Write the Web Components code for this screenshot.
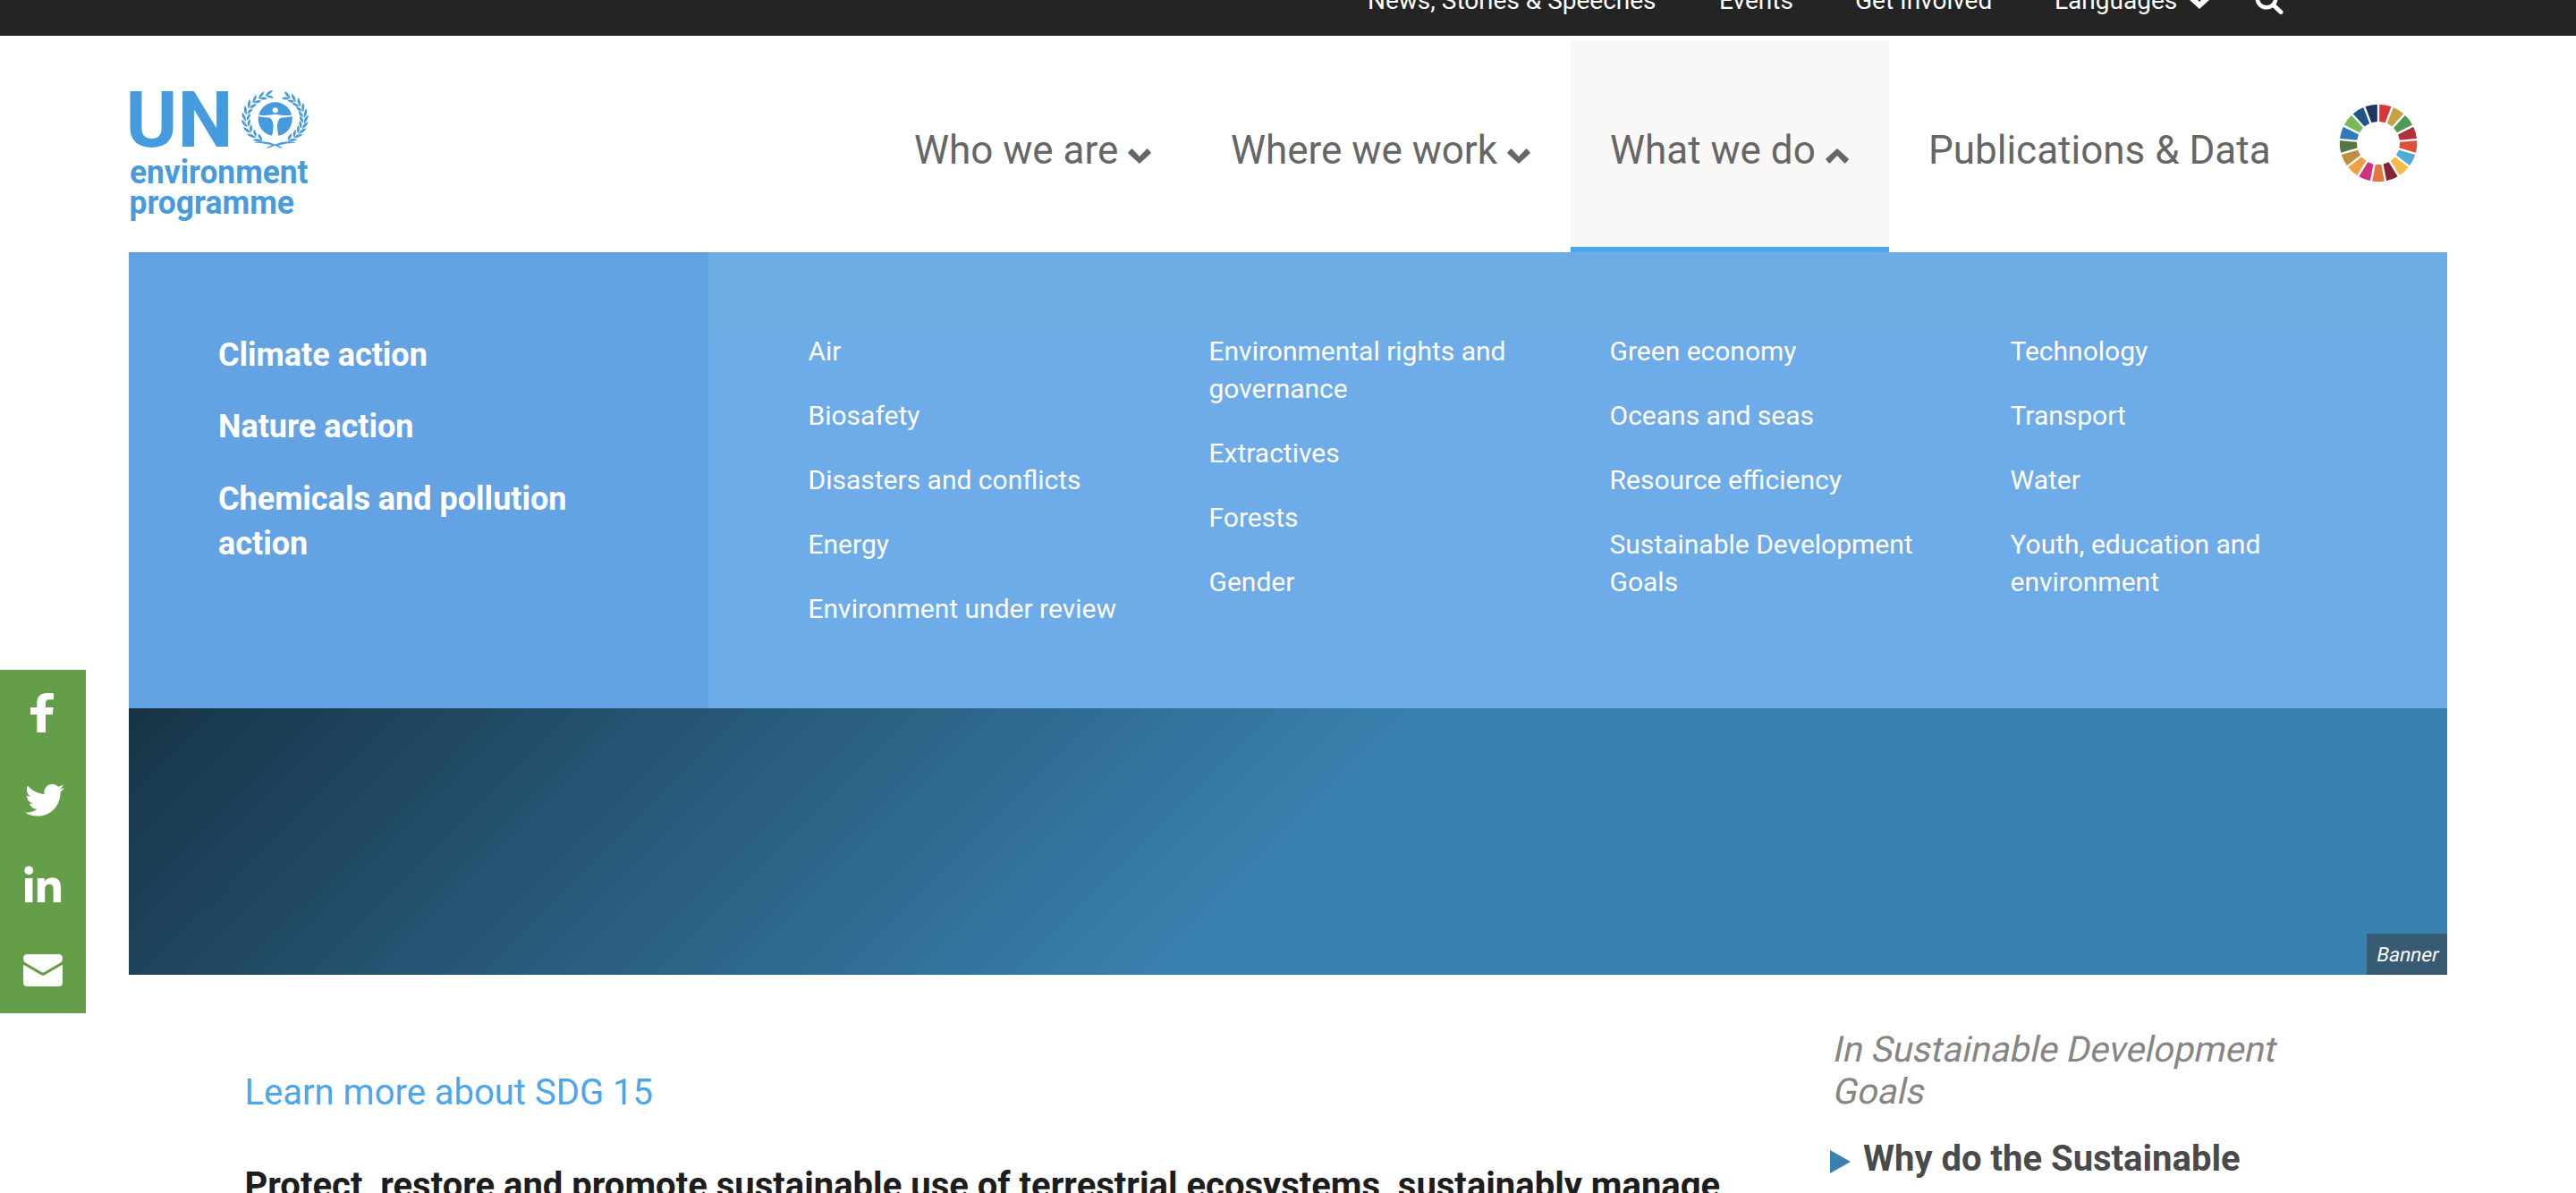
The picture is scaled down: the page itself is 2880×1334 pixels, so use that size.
<!DOCTYPE html>
<html lang="en">
<head>
<meta charset="utf-8">
<title>Goal 15 | UNEP</title>
<style>
body{margin:0;background:#fff;font-family:Roboto,"Open Sans",sans-serif;overflow:hidden}
</style>
</head>
<body>
<unep-page></unep-page>
<script>
const define=(name,html,setup)=>{
  const t=document.createElement('template');t.innerHTML=html;
  customElements.define(name,class extends HTMLElement{
    connectedCallback(){
      if(this.shadowRoot)return;
      this.attachShadow({mode:'open'}).append(t.content.cloneNode(true));
      if(setup)setup(this,this.shadowRoot);
    }
  });
};

define('unep-chevron',`<style>
:host{display:inline-block;width:26px;height:17px;flex:none}
:host([up]){transform:scaleY(-1)}
svg{display:block}
</style><svg width="26" height="17" viewBox="0 0 26 17"><path d="M.4 4.200 3.600.7Q4.400 0 5.200.7L13 9 20.800.7Q21.600 0 22.400.7L25.600 4.200Q26 5 25.400 5.700L13 17 .6 5.700Q0 5 .4 4.200Z" fill="currentColor"/></svg>`);

define('unep-topbar',`<style>
:host{display:block;height:40px;background:#242424;color:#fff;overflow:hidden}
nav{display:flex;margin-top:-15px;padding-left:1529px;font-size:28px;line-height:32px;white-space:nowrap}
span{flex:none}
.n{width:393px}.e{width:152px}.g{width:223px}.l{width:149px}
unep-chevron{margin-top:8px;width:75px}
svg{display:block;margin-top:-1px}
</style><nav><span class="n">News, Stories &amp; Speeches</span><span class="e">Events</span><span class="g">Get Involved</span><span class="l">Languages</span><unep-chevron></unep-chevron>
<svg width="34" height="34" viewBox="0 0 34 34"><circle cx="13" cy="14" r="10.300" fill="none" stroke="#fff" stroke-width="4.600"/><path d="M20.500 21.500 29 29.500" stroke="#fff" stroke-width="5" stroke-linecap="round"/></svg></nav>`);

define('unep-logo',`<style>:host{display:block;width:204px;height:160px}svg{display:block}text{font-family:Roboto,sans-serif;font-weight:700;fill:#469bde}</style>
<svg width="204" height="160" viewBox="144 96 204 160">
<text x="140.500" y="164.300" font-size="88" textLength="120" lengthAdjust="spacingAndGlyphs">UN</text>
<text x="145" y="204.700" font-size="36.500" textLength="199.500" lengthAdjust="spacingAndGlyphs">environment</text>
<text x="144.500" y="238.600" font-size="36.500" textLength="184.500" lengthAdjust="spacingAndGlyphs">programme</text>
<g fill="#469bde"><circle cx="307.700" cy="133.300" r="19"/><g id="w"></g>
<path d="M283 159.500Q296 156 307.500 161.500Q320 156 331.500 159.500Q320 160 311 162.500L316.500 165.500H313L307.500 162.800 300.500 165.500H297L304 162.200Q295 160 283 159.500Z"/></g>
<g fill="#fff"><circle cx="307.700" cy="123.200" r="3"/><path d="M288.500 128.400Q297 129.600 303.500 128.600Q307.700 127 312 128.600Q318 129.600 327 128.400V130Q318 131.400 313.500 131.800Q309.600 136 309.900 142Q310.400 148 311.500 152.800H303.800Q305.200 148 305.600 142Q306 136 302 131.800Q297 131.400 288.500 130Z"/></g>
</svg>`,(h,r)=>{
  let s='';
  for(const side of [-1,1])for(let i=0;i<10;i++){
    const a=(34+i*(side<0?15:13.600))*Math.PI/180;
    for(const [rad,len,tilt] of [[33.800,11,26],[28.800,9,-26]]){
      const x=307.500+side*Math.sin(a)*rad*1.030,y=132.600+Math.cos(a)*rad*.86;
      const rot=Math.atan2(-Math.sin(a),side*Math.cos(a))*180/Math.PI+side*tilt;
      s+=`<path d="M${-len/2} 0Q0 -3.400 ${len/2} 0Q0 2.600 ${-len/2} 0Z" transform="translate(${x.toFixed(1)} ${y.toFixed(1)}) rotate(${rot.toFixed(1)})"/>`;
    }
  }
  r.getElementById('w').innerHTML=s;
});

define('sdg-wheel',`<style>:host{display:block;width:90px;height:90px}svg{display:block}</style><svg width="90" height="90" viewBox="-45 -45 90 90"></svg>`,(h,r)=>{
  const c=['#d73637','#c9a145','#4c9b52','#b0303c','#de4f39','#4fabd7','#f4bc47','#832338','#e2763b','#d03183','#eca043','#c28f40','#54783f','#3279b9','#76b955','#235489','#1f3464'];
  const p=(rad,i)=>{const a=i*2*Math.PI/17;return (Math.sin(a)*rad).toFixed(2)+' '+(-Math.cos(a)*rad).toFixed(2)};
  r.querySelector('svg').innerHTML=c.map((f,i)=>`<path fill="${f}" d="M${p(43.300,i)}A43.300 43.300 0 0 1 ${p(43.300,i+1)}L${p(24.300,i+1)}L${p(24.300,i)}Z"/>`).join('')+c.map((f,i)=>`<path stroke="#fff" stroke-width="2.400" d="M${p(20,i)}L${p(45,i)}"/>`).join('');
});

define('nav-tab',`<style>
:host{display:flex;box-sizing:border-box;flex:none;height:236px;padding:92px 0 0 44px;gap:11px;font-size:44px;line-height:60px;color:#666;white-space:nowrap}
:host([active]){background:#f9f8f7;border-bottom:6px solid #4ba6eb}
unep-chevron{margin-top:28px}
</style><slot></slot>`,(h,r)=>{
  if(h.hasAttribute('arrow')){const c=document.createElement('unep-chevron');if(h.hasAttribute('active'))c.setAttribute('up','');r.append(c)}
});

define('unep-header',`<style>
:host{display:flex;height:242px;padding-left:144px}
unep-logo{margin:56px 630px 0 0}
nav{display:flex;padding-top:6px}
sdg-wheel{margin:75px 0 0 34px}
</style><unep-logo></unep-logo><nav>
<nav-tab arrow style="width:354px">Who we are</nav-tab>
<nav-tab arrow style="width:424px">Where we work</nav-tab>
<nav-tab arrow active style="width:356px">What we do</nav-tab>
<nav-tab style="width:468px">Publications &amp; Data</nav-tab></nav><sdg-wheel></sdg-wheel>`);

define('mega-column',`<style>
:host{display:flex;flex-direction:column;gap:30px;width:370px;flex:none}
</style><slot></slot>`);

define('mega-menu',`<style>
:host{display:flex;height:510px;color:#fff}
.l{box-sizing:border-box;width:648px;background:#63a3e4;padding:90px 100px 0;display:flex;flex-direction:column;gap:30px;font-size:36px;font-weight:700;line-height:50.400px}
.r{box-sizing:border-box;flex:1;background:linear-gradient(#6eace6 0 98px,#6eabe9 98px);padding:90px 0 0 111.500px;display:flex;gap:78px;font-size:30px;line-height:42px}
</style><div class="l"><span>Climate action</span><span>Nature action</span><span>Chemicals and pollution action</span></div>
<div class="r">
<mega-column><span>Air</span><span>Biosafety</span><span>Disasters and conflicts</span><span>Energy</span><span>Environment under review</span></mega-column>
<mega-column><span>Environmental rights and governance</span><span>Extractives</span><span>Forests</span><span>Gender</span></mega-column>
<mega-column><span>Green economy</span><span>Oceans and seas</span><span>Resource efficiency</span><span>Sustainable Development Goals</span></mega-column>
<mega-column><span>Technology</span><span>Transport</span><span>Water</span><span>Youth, education and environment</span></mega-column>
</div>`);

define('page-banner',`<style>
:host{display:flex;justify-content:flex-end;align-items:flex-end;height:298px;background:linear-gradient(135deg,#173447 0,#3981af 1037px)}
div{box-sizing:border-box;width:90px;height:46px;padding-left:10px;background:#375b73;color:#fff;font-size:22px;line-height:47px}
span{display:block;transform:skewX(-12deg);transform-origin:0 31px}
</style><div><span><slot></slot></span></div>`);

define('share-bar',`<style>
:host{position:absolute;left:0;top:749px;width:96px;height:384px;background:#649e48;display:flex;flex-direction:column}
svg{display:block;width:96px;height:96px;fill:#fff}
</style>
<svg viewBox="0 749 96 96"><path d="M41.300 819V799H34V791H41.300V786C41.300 778.500 45.500 774.900 52.500 774.900C56 774.900 59 775 60 775.200V782.300H55.500C52 782.300 51 784 51 787V791H59.700L58.800 799H51V819Z"/></svg>
<svg viewBox="0 845 96 96"><path transform="translate(28 872.700) scale(.0859375)" d="M459.370 151.716c.325 4.548.325 9.097.325 13.645 0 138.720-105.583 298.558-298.558 298.558-59.452 0-114.680-17.219-161.137-47.106 8.447.974 16.568 1.299 25.340 1.299 49.055 0 94.213-16.568 130.274-44.832-46.132-.975-84.792-31.188-98.112-72.772 6.498.974 12.995 1.624 19.818 1.624 9.421 0 18.843-1.300 27.614-3.573-48.081-9.747-84.143-51.980-84.143-102.985v-1.299c13.969 7.797 30.214 12.670 47.431 13.319-28.264-18.843-46.781-51.005-46.781-87.391 0-19.492 5.197-37.360 14.294-52.954 51.655 63.675 129.300 105.258 216.365 109.807-1.624-7.797-2.599-15.918-2.599-24.040 0-57.828 46.782-104.934 104.934-104.934 30.213 0 57.502 12.670 76.670 33.137 23.715-4.548 46.456-13.320 66.599-25.340-7.798 24.366-24.366 44.833-46.132 57.827 21.117-2.273 41.584-8.122 60.426-16.243-14.292 20.791-32.161 39.308-52.628 54.253z"/></svg>
<svg viewBox="0 941 96 96"><path transform="translate(27.400 968.400) scale(.0908)" d="M100.280 448H7.400V148.900h92.880zM53.790 108.100C24.090 108.100 0 83.500 0 53.800a53.790 53.790 0 0 1 107.580 0c0 29.700-24.100 54.300-53.790 54.300zM447.900 448h-92.680V302.400c0-34.700-.7-79.200-48.290-79.200-48.290 0-55.690 37.700-55.690 76.700V448h-92.780V148.900h89.080v40.800h1.300c12.400-23.500 42.690-48.300 87.880-48.300 94 0 111.280 61.900 111.280 142.300V448z"/></svg>
<svg viewBox="0 1037 96 96"><g transform="translate(26 1067)"><path d="M5 0H39Q44 0 44 5Q44 8 41.500 9.600L23.500 20Q22 20.800 20.500 20L2.500 9.600Q0 8 0 5Q0 0 5 0Z"/><path d="M0 12Q1.500 12.300 3 13.200L19.500 23Q22 24.500 24.500 23L41 13.200Q42.500 12.300 44 12V31.500Q44 36 39.500 36H4.500Q0 36 0 31.500Z"/></g></svg>`);

define('page-content',`<style>
:host{display:flex;height:244px;overflow:hidden;padding-left:129.500px;font-size:40px;line-height:47px}
.m{width:1774.500px;flex:none;white-space:nowrap}
.a{color:#4ba6eb;margin-top:108px}
.b{color:#1d1d1d;font-weight:700;margin-top:57px}
.i{color:#878584;margin-top:60px;width:560px}
.i span{display:block;transform:skewX(-12deg);transform-origin:0 37px}
.w{display:flex;gap:14px;color:#4a4a4a;font-weight:700;margin-top:28px}
.w svg{display:block;margin-top:14px;margin-left:-2px}
</style><div class="m"><div class="a">Learn more about SDG 15</div><div class="b">Protect, restore and promote sustainable use of terrestrial ecosystems, sustainably manage</div></div>
<div><div class="i"><span>In Sustainable Development</span><span>Goals</span></div><div class="w"><svg width="23" height="26"><path d="M0 0 23 13 0 26Z" fill="#3981af"/></svg><span>Why do the Sustainable</span></div></div>`);

define('unep-page',`<style>
:host{display:block;width:2880px;height:1334px;overflow:hidden}
main{margin:0 144px}
</style><unep-topbar></unep-topbar><unep-header></unep-header>
<main><mega-menu></mega-menu><page-banner>Banner</page-banner><page-content></page-content></main><share-bar></share-bar>`);
</script>
</body>
</html>
